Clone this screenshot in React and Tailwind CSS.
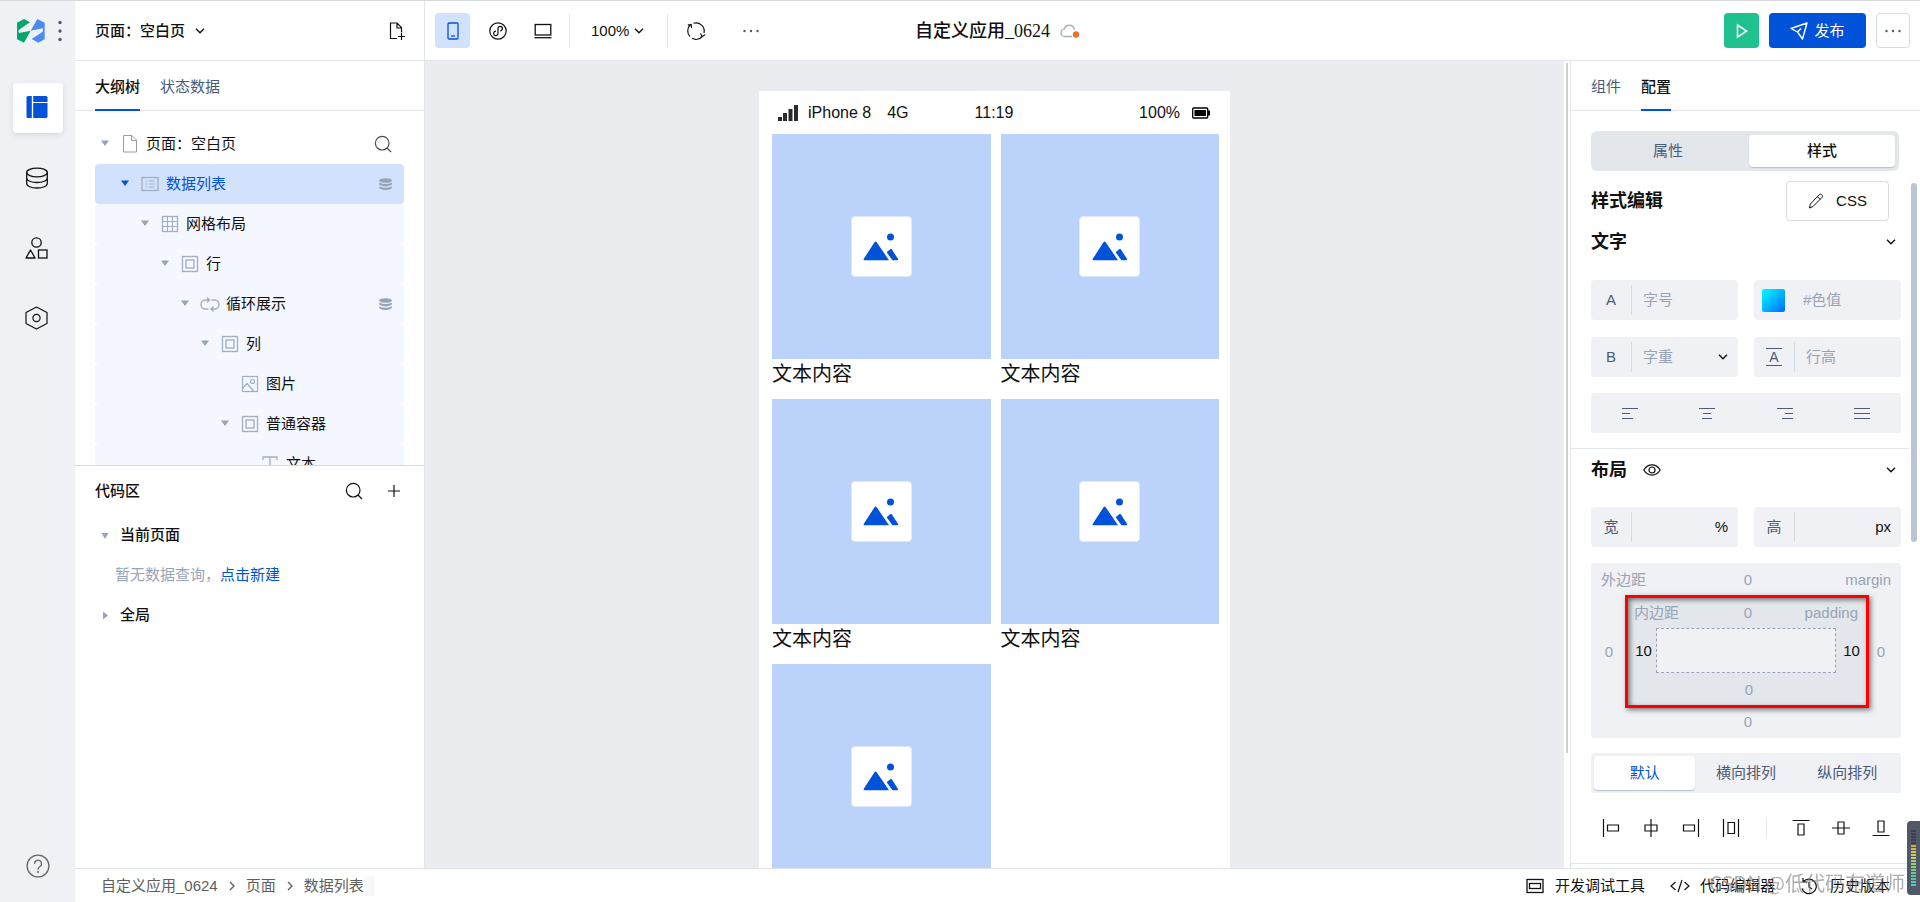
import React, { useState } from 'react';
import clsx from 'clsx';

const Icon = ({ w = 18, h = w, sw = 1, className, children }) => (
  <svg
    width={w}
    height={h}
    viewBox={`0 0 ${w} ${h}`}
    fill="none"
    stroke="currentColor"
    strokeWidth={sw}
    className={clsx('shrink-0', className)}
    aria-hidden="true"
  >
    {children}
  </svg>
);

const Chevron = ({ className }) => (
  <Icon w={10} h={8} sw={1.4} className={className}>
    <path d="M1 1.8l4 4 4-4" />
  </Icon>
);

const ChevronRight = () => (
  <Icon w={8} h={10} sw={1.3}>
    <path d="M2 1l4 4-4 4" />
  </Icon>
);

const Caret = ({ small, right, className }) => (
  <Icon w={12} h={12} className={className}>
    {right ? (
      <path d="M4 2.5l5 4-5 4z" fill="currentColor" stroke="none" />
    ) : small ? (
      <path d="M2.5 4h7L6 10z" fill="currentColor" stroke="none" />
    ) : (
      <path d="M2 2.500h8L6 8z" fill="currentColor" stroke="none" />
    )}
  </Icon>
);

const Dots = ({ className }) => (
  <Icon w={18} h={4} className={className}>
    <g fill="currentColor" stroke="none">
      <circle cx="2.5" cy="2" r="1.2" />
      <circle cx="9" cy="2" r="1.2" />
      <circle cx="15.5" cy="2" r="1.2" />
    </g>
  </Icon>
);

const SearchIcon = () => (
  <Icon w={18} sw={1.2}>
    <circle cx="8.2" cy="8.2" r="6.8" />
    <path d="M13 13l4 4" />
  </Icon>
);

const Logo = () => (
  <svg width="28" height="24" viewBox="0 0 84 72" className="shrink-0" aria-hidden="true">
    <path d="M0 11L21 0l18 10L6 32q-4 4 0 10l35-7-20 36L0 61z" fill="#05a66b" />
    <path d="M41 35L61 0l22 11v50L64 71 44 60l33-22q3-6 0-10z" fill="#4a8bf5" />
  </svg>
);

const treeIcons = {
  page: (
    <Icon className="text-[#9b9b9b]">
      <path d="M2.5.5h8.500l4.500 4.500v12h-13z M10.500.5v5h5" />
    </Icon>
  ),
  list: (
    <Icon>
      <rect x="1" y="2.500" width="16" height="13" strokeWidth="1.300" />
      <path d="M4.500 6h1.500M7.500 6h6M4.500 9h1.500M7.500 9h6M4.500 12h1.500M7.500 12h6" />
    </Icon>
  ),
  grid: (
    <Icon>
      <rect x="1.500" y="1.500" width="15" height="15" strokeWidth="1.300" />
      <path d="M6.500 1.500v15M11.500 1.500v15M1.500 6.500h15M1.500 11.500h15" />
    </Icon>
  ),
  box: (
    <Icon sw={1.3}>
      <rect x="1.500" y="1.500" width="15" height="15" />
      <rect x="5" y="5" width="8" height="8" />
    </Icon>
  ),
  loop: (
    <Icon w={20} h={18} sw={1.4}>
      <path d="M8.500 14H5.500a4.500 4.500 0 0 1 0-9h4M7 2.500l2.500 2.500L7 7.500M11.500 5h3a4.500 4.500 0 0 1 0 9h-3.500M13.500 11.500L11 14l2.500 2.500" />
    </Icon>
  ),
  image: (
    <Icon sw={1.2}>
      <rect x="1.500" y="1.500" width="15" height="15" />
      <circle cx="11.500" cy="6.500" r="2" />
      <path d="M1.500 13.500l4.500-5 7 8" />
    </Icon>
  ),
  text: (
    <Icon sw={1.3}>
      <path d="M2 5V2h14v3M9 2v14M6 16h6" />
    </Icon>
  ),
};

const treeRows = [
  { label: '页面：空白页', level: 0, icon: 'page', search: true },
  { label: '数据列表', level: 1, icon: 'list', data: true, selected: true },
  { label: '网格布局', level: 2, icon: 'grid' },
  { label: '行', level: 3, icon: 'box' },
  { label: '循环展示', level: 4, icon: 'loop', data: true },
  { label: '列', level: 5, icon: 'box' },
  { label: '图片', level: 6, icon: 'image', leaf: true },
  { label: '普通容器', level: 6, icon: 'box' },
  { label: '文本', level: 7, icon: 'text', leaf: true },
];

const TreeRow = ({ row }) => (
  <li
    className={clsx(
      'flex h-10 items-center rounded pr-3',
      row.selected ? 'bg-[#d3e2fc] text-[#0052d9]' : row.level > 0 && 'bg-[#f4f7ff]'
    )}
    style={{ paddingLeft: row.level * 20 + 4 }}
  >
    <span className="w-[22px]">
      {!row.leaf && <Caret className={row.selected ? 'text-[#0052d9]' : 'text-[#97a3b7]'} />}
    </span>
    <span className="mr-[7px] flex w-[18px] justify-center text-[#a3aec2]">{treeIcons[row.icon]}</span>
    <span>{row.label}</span>
    {row.search && (
      <button className="ml-auto text-[#4b4b4b]" aria-label="搜索组件">
        <SearchIcon />
      </button>
    )}
    {row.data && (
      <Icon w={13} h={14} className="ml-auto text-[#97a3b7]">
        <g fill="currentColor" stroke="none">
          <ellipse cx="6.500" cy="3.500" rx="6.300" ry="2.300" />
          <path d="M.2 5.400q6.300 3 12.600 0v2.400q-6.300 3.400-12.600 0zM.2 9.200q6.300 3 12.600 0v2q-6.300 3.800-12.600 0z" />
        </g>
      </Icon>
    )}
  </li>
);

const Sidebar = () => {
  const items = [
    {
      label: '页面',
      active: true,
      icon: (
        <Icon w={22} className="text-[#0052d9]">
          <g fill="currentColor" stroke="none">
            <path d="M2 0h3.800v22H2a1.500 1.500 0 0 1-1.500-1.500v-19A1.500 1.500 0 0 1 2 0z" />
            <path d="M7.200 0H20a1.500 1.500 0 0 1 1.500 1.500V6H7.200z" />
            <path d="M7.200 7h14.300v13.500A1.500 1.500 0 0 1 20 22H7.200z" />
          </g>
        </Icon>
      ),
    },
    {
      label: '数据源',
      icon: (
        <Icon w={24} sw={1.3}>
          <ellipse cx="12" cy="6.500" rx="10.300" ry="4.300" />
          <path d="M1.700 6.500v11c0 2.600 4.600 4.500 10.300 4.500s10.300-1.900 10.300-4.500v-11M1.700 12c0 2.600 4.600 4.500 10.300 4.500s10.300-1.900 10.300-4.500" />
        </Icon>
      ),
    },
    {
      label: '素材',
      icon: (
        <Icon w={24} sw={1.3}>
          <circle cx="11.500" cy="6.500" r="4.700" />
          <path d="M5.500 14l4.600 8H1z" strokeLinejoin="round" />
          <rect x="13.500" y="14" width="8.500" height="8" />
        </Icon>
      ),
    },
    {
      label: '设置',
      icon: (
        <Icon w={24} sw={1.2}>
          <path d="M11.500 1l10.500 5.500v11L11.500 23 1 17.500v-11z" strokeLinejoin="round" />
          <circle cx="11.500" cy="12" r="3.600" />
        </Icon>
      ),
    },
  ];

  return (
    <aside className="flex w-[75px] shrink-0 flex-col bg-[#f0f1f5] pb-[11px]">
      <div className="flex h-[60px] items-center pl-[17px]">
        <Logo />
        <button className="ml-[13px] text-[#4b5b76]" aria-label="菜单">
          <Icon w={4} h={22}>
            <g fill="currentColor" stroke="none">
              <circle cx="2" cy="2.500" r="1.700" />
              <circle cx="2" cy="11" r="1.700" />
              <circle cx="2" cy="19.500" r="1.700" />
            </g>
          </Icon>
        </button>
      </div>
      <nav className="mt-[22px] flex flex-col items-center gap-5">
        {items.map((item) => (
          <button
            key={item.label}
            aria-label={item.label}
            className={clsx(
              'flex h-[50px] w-[50px] items-center justify-center rounded pr-[2px]',
              item.active && 'bg-white pb-[2px] shadow-[0_2px_6px_rgba(0,0,0,0.1)]'
            )}
          >
            {item.icon}
          </button>
        ))}
      </nav>
      <button
        className="mx-auto mt-auto flex h-[50px] w-[50px] items-center justify-center text-[#666]"
        aria-label="帮助"
      >
        <Icon w={24} sw={1.3}>
          <circle cx="12" cy="12" r="10.900" />
          <path d="M8.500 9.800a3.500 3.500 0 1 1 5.200 3c-1.200.7-1.700 1.300-1.700 3" />
          <circle cx="12" cy="18" r="1" fill="currentColor" stroke="none" />
        </Icon>
      </button>
    </aside>
  );
};

const Header = () => (
  <header className="grid h-[60px] shrink-0 grid-cols-[1fr_auto_1fr] items-center border-b border-[#e3e6eb]">
    <div className="flex h-full items-center">
      <div className="flex h-full w-[350px] items-center border-r border-[#e3e6eb] pr-[19px] pl-5">
        <button className="flex items-center gap-[10px] font-medium">
          页面：空白页
          <Chevron />
        </button>
        <button className="ml-auto" aria-label="新建页面">
          <Icon w={16} h={18} sw={1.2}>
            <path d="M8 16.500H1.500V1H8l4.500 4.500v5M8 1v5h4.500M9 14.500h7M12.500 11v7" />
          </Icon>
        </button>
      </div>
      <button
        className="ml-[10px] flex h-[35px] w-[35px] items-center justify-center rounded bg-[#d3e2fc] text-[#0052d9]"
        aria-label="手机"
      >
        <Icon w={12} h={18} sw={1.3}>
          <rect x="1" y="1" width="10" height="16" rx="1" />
          <path d="M4 14h4" />
        </Icon>
      </button>
      <button className="ml-[10px] flex h-[35px] w-[35px] items-center justify-center" aria-label="小程序">
        <Icon w={18} sw={1.2}>
          <circle cx="9" cy="9" r="8.200" />
          <path d="M7 9.200a2.200 2.200 0 1 0 2 2.200V6.600a2.200 2.200 0 1 1 2.200 2.200" />
        </Icon>
      </button>
      <button className="ml-[10px] flex h-[35px] w-[35px] items-center justify-center" aria-label="电脑">
        <Icon w={18} h={16} sw={1.3}>
          <rect x="1.200" y="1.500" width="15.600" height="10.500" />
          <path d="M.5 14.700h17" />
        </Icon>
      </button>
      <div className="ml-[9px] h-[34px] w-px bg-[#e3e6eb]" />
      <label className="ml-[21px] flex items-center gap-1">
        <select className="appearance-none outline-none" aria-label="缩放">
          <option>100%</option>
        </select>
        <Chevron />
      </label>
      <div className="ml-[23px] h-[34px] w-px bg-[#e3e6eb]" />
      <button className="ml-[10px] flex h-[35px] w-[35px] items-center justify-center" aria-label="刷新">
        <Icon w={20} sw={1.2}>
          <path d="M7.500 2.200A8.300 8.300 0 0 1 18 12M16.200 15.500A8.300 8.300 0 0 1 6 17.300M4 15.700A8.300 8.300 0 0 1 4.500 3.800" />
          <path d="M1.800 4.200l3.300-.7.5 3.400M14.500 12.500l1.700 3 3-1.700" />
        </Icon>
      </button>
      <button className="ml-5 flex h-[35px] w-[35px] items-center justify-center text-[#4b5b76]" aria-label="更多工具">
        <Dots />
      </button>
    </div>

    <h1 className="flex items-center gap-[10px] font-['Liberation_Serif','Noto_Sans_CJK_SC',serif] text-lg font-medium">
      自定义应用_0624
      <Icon w={20} h={16} sw={1.4} className="text-[#a3aec2]">
        <path d="M12 13.500H5a3.800 3.800 0 0 1-.5-7.600 5 5 0 0 1 9.800 1" />
        <circle cx="16" cy="11.500" r="3.200" fill="#ed6f2d" stroke="none" />
      </Icon>
    </h1>

    <div className="flex items-center justify-end gap-[10px] pr-[10px]">
      <button
        className="flex h-[35px] w-[35px] items-center justify-center rounded bg-[#1fc28f] text-white"
        aria-label="预览"
      >
        <Icon w={12} h={16} sw={1.5}>
          <path d="M1.500 2v12l9.200-6z" />
        </Icon>
      </button>
      <button className="flex h-[35px] w-[97px] items-center justify-center gap-[6px] rounded bg-[#0052d9] text-white">
        <Icon w={18} sw={1.4}>
          <path d="M1 6.500L17 1l-4.500 16-5-7zM7.500 10l3.500-3.500" strokeLinejoin="round" />
        </Icon>
        发布
      </button>
      <button
        className="flex h-[35px] w-[34px] items-center justify-center rounded border border-[#d5dae3] text-[#4b5b76]"
        aria-label="更多"
      >
        <Dots />
      </button>
    </div>
  </header>
);

const Tabs = ({ tabs, active, onChange }) => (
  <div className="flex h-[50px] shrink-0 gap-5 border-b border-[#e3e6eb] px-5" role="tablist">
    {tabs.map((tab) => (
      <button
        key={tab}
        role="tab"
        aria-selected={tab === active}
        onClick={() => onChange(tab)}
        className={clsx(
          'h-[50px] border-b-2 pt-1',
          tab === active ? 'border-[#0052d9] font-medium' : 'border-transparent text-[#4b5b76]'
        )}
      >
        {tab}
      </button>
    ))}
  </div>
);

const LeftPanel = () => {
  const [tab, setTab] = useState('大纲树');

  return (
    <section className="flex w-[350px] shrink-0 flex-col border-r border-[#e3e6eb]">
      <Tabs tabs={['大纲树', '状态数据']} active={tab} onChange={setTab} />
      <ul className="h-[354px] overflow-hidden px-5 pt-[13px]">
        {treeRows.map((row) => (
          <TreeRow key={row.label} row={row} />
        ))}
      </ul>
      <div className="flex-1 border-t border-[#d5dae3] px-5">
        <div className="flex h-[49px] items-center">
          <h2 className="font-medium">代码区</h2>
          <button className="ml-auto" aria-label="搜索代码">
            <SearchIcon />
          </button>
          <button className="mr-1 ml-[25px]" aria-label="新建代码">
            <Icon w={12} sw={1.2}>
              <path d="M6 0v12M0 6h12" />
            </Icon>
          </button>
        </div>
        <h3 className="flex h-10 items-center gap-[9px] pl-1 font-medium">
          <Caret small className="text-[#97a3b7]" />
          当前页面
        </h3>
        <p className="flex h-10 items-center pl-5 text-[#97a3b7]">
          暂无数据查询，
          <a href="#new" className="text-[#0052d9]">
            点击新建
          </a>
        </p>
        <h3 className="flex h-10 items-center gap-[9px] pl-1 font-medium">
          <Caret right className="text-[#97a3b7]" />
          全局
        </h3>
      </div>
    </section>
  );
};

const PhoneCard = () => (
  <div className="mb-[10px]">
    <div className="flex h-[225px] items-center justify-center bg-[#bbd3fb]">
      <div className="flex h-[61px] w-[61px] items-center justify-center rounded border border-[#dfe9fd] bg-white">
        <svg width="36" height="28" viewBox="0 0 36 28" fill="#0052d9" aria-hidden="true">
          <circle cx="27.500" cy="4" r="3.500" />
          <path d="M12.300 8.700q.6-.4 1.200.3L26 27.300H1.300Q0 27 .8 25.800L11.500 9.300zM27.500 16q.8-.4 1.400.4l6 9.400q.6 1.300-.8 1.500h-4.600l-5.300-7.200q-.4-.7 0-1.300z" />
        </svg>
      </div>
    </div>
    <p className="text-xl leading-[30px]">文本内容</p>
  </div>
);

const Canvas = () => (
  <main className="flex min-w-0 flex-1">
    <div className="flex flex-1 justify-center overflow-hidden bg-[#ebecf0] pt-[30px]">
      <div className="h-fit w-[471px] shrink-0 bg-white">
        <div className="grid h-[43px] grid-cols-[1fr_auto_1fr] items-center pr-5 pl-[19px] text-base">
          <div className="flex items-center">
            <Icon w={20} h={16} className="mr-[10px] text-[#2b2b2b]">
              <path
                d="M0 12h4v4H0zM5 8h4v8H5zM10.500 4h4v12h-4zM16 0h4v16h-4z"
                fill="currentColor"
                stroke="none"
              />
            </Icon>
            iPhone 8<span className="ml-4">4G</span>
          </div>
          <span>11:19</span>
          <div className="flex items-center justify-end gap-3">
            100%
            <Icon w={18} h={12} className="text-black">
              <rect x=".7" y="1" width="15" height="10" rx="1" strokeWidth="1.300" />
              <path d="M2.500 3h11.500v6H2.500zM16 3.500h2v5h-2z" fill="currentColor" stroke="none" />
            </Icon>
          </div>
        </div>
        <div className="grid grid-cols-2 gap-x-[10px] pr-[11px] pl-[13px]">
          {[1, 2, 3, 4, 5].map((n) => (
            <PhoneCard key={n} />
          ))}
        </div>
      </div>
    </div>
    <div className="w-[6px] pt-[2px] pl-[2px]">
      <div className="h-[690px] w-[2px] bg-[#cfcfcf]" />
    </div>
  </main>
);

const Field = ({ id, label, placeholder, unit, children }) => (
  <div className="flex h-10 items-center rounded bg-[#f0f1f5]">
    <label htmlFor={id} className="flex h-[30px] w-[41px] shrink-0 items-center justify-center border-r border-[#d5dae3] text-[#4b5b76]">
      {label}
    </label>
    {children || (
      <input
        id={id}
        type="text"
        placeholder={placeholder}
        className="w-0 flex-1 bg-transparent pl-[11px] outline-none placeholder:text-[#97a3b7]"
      />
    )}
    {unit && <span className="pr-[10px]">{unit}</span>}
  </div>
);

const SectionTitle = ({ title, children }) => (
  <div className="flex h-[42px] items-center">
    <h2 className="text-lg font-bold">{title}</h2>
    {children}
    <button className="mr-[5px] ml-auto" aria-label={`收起${title}`}>
      <Chevron />
    </button>
  </div>
);

const SpacingInput = ({ label, value = '0', className = 'w-8 pl-1' }) => (
  <input
    type="text"
    aria-label={label}
    defaultValue={value}
    className={clsx('bg-transparent text-center outline-none', className)}
  />
);

const BoxModel = () => (
  <div className="rounded bg-[#f0f1f5] text-[#97a3b7]">
    <div className="grid h-[34px] grid-cols-[1fr_auto_1fr] items-center px-[10px]">
      <span>外边距</span>
      <SpacingInput label="上外边距" />
      <span className="text-right">margin</span>
    </div>
    <div className="flex items-center">
      <SpacingInput label="左外边距" className="w-9" />
      <div className="relative flex-1 bg-[#e3e6eb]">
        <div className="grid h-[31px] grid-cols-[1fr_auto_1fr] items-center pr-[9px] pl-[7px]">
          <span>内边距</span>
          <SpacingInput label="上内边距" />
          <span className="text-right">padding</span>
        </div>
        <div className="flex h-[45px] items-stretch">
          <SpacingInput label="左内边距" value="10" className="w-[29px] pl-1 text-[#111]" />
          <div className="flex-1 border border-dashed border-[#97a3b7] bg-[#f0f1f5]" />
          <SpacingInput label="右内边距" value="10" className="w-[31px] text-[#111]" />
        </div>
        <div className="flex h-[33px] items-center justify-center">
          <SpacingInput label="下内边距" />
        </div>
        <div className="pointer-events-none absolute -inset-[2px] border-[3px] border-[#f00] shadow-[2px_2px_5px_rgba(0,0,0,0.5),inset_2px_2px_5px_rgba(0,0,0,0.5)]" />
      </div>
      <SpacingInput label="右外边距" className="w-[34px] pr-[6px]" />
    </div>
    <div className="flex h-8 items-center justify-center">
      <SpacingInput label="下外边距" />
    </div>
  </div>
);

const textAligns = [
  { label: '左对齐', d: 'M0 1.500h16M0 6.500h8M0 11.500h11' },
  { label: '居中对齐', d: 'M0 1.500h16M4 6.500h8M3 11.500h10' },
  { label: '右对齐', d: 'M0 1.500h16M8 6.500h8M5 11.500h11' },
  { label: '两端对齐', d: 'M0 1.500h16M0 6.500h16M0 11.500h16' },
];

const mainAligns = [
  { label: '主轴起点', d: 'M1.500 0v18M5.500 6h11v6h-11z' },
  { label: '主轴居中', d: 'M9 0v18M3 6h12v6H3z' },
  { label: '主轴终点', d: 'M16.500 0v18M1.500 6h11v6h-11z' },
  { label: '主轴分布', d: 'M1.500 0v18M16.500 0v18M6 3.500h6.500v11H6z' },
];

const crossAligns = [
  { label: '交叉轴起点', d: 'M.5 1.500h17M6 5h6v11H6z' },
  { label: '交叉轴居中', d: 'M0 9h18M6 3h6v12H6z' },
  { label: '交叉轴终点', d: 'M.5 16.500h17M6 2h6v11H6z' },
];

const AlignButton = ({ item }) => (
  <button className="flex h-10 w-10 items-center justify-center" aria-label={item.label}>
    <Icon w={18} sw={1.2}>
      <path d={item.d} />
    </Icon>
  </button>
);

const RightPanel = () => {
  const [tab, setTab] = useState('配置');

  return (
    <section className="relative flex w-[350px] shrink-0 flex-col overflow-hidden border-l border-[#e3e6eb]">
      <Tabs tabs={['组件', '配置']} active={tab} onChange={setTab} />
      <div className="mt-5 mr-[21px] ml-5 grid h-10 shrink-0 grid-cols-2 rounded-md bg-[#e3e6eb]">
        <button className="text-[#4b5b76]">属性</button>
        <button className="m-1 rounded-sm bg-white font-medium shadow-[0_1px_1px_#b5bfce]">样式</button>
      </div>

      <div className="mr-[11px] border-b border-[#e3e6eb] pt-[10px] pr-2 pb-[15px] pl-5">
        <div className="flex h-10 items-center justify-between pr-3">
          <h2 className="text-lg font-bold">样式编辑</h2>
          <button className="flex h-10 w-[103px] items-center justify-center gap-3 rounded border border-[#d5dae3]">
            <Icon w={16} sw={1}>
              <path d="M1.500 15l.8-4L11.500 1.500q1-.8 2 0l.7.800q.8 1 0 2L5 13.500zM9.500 3.700l2.700 2.800" />
            </Icon>
            CSS
          </button>
        </div>
        <SectionTitle title="文字" />
        <div className="mt-[17px] grid grid-cols-2 gap-x-4 gap-y-[17px]">
          <Field id="font-size" label="A" placeholder="字号" />
          <div className="flex h-10 items-center rounded bg-[#f0f1f5] pl-2">
            <span className="h-[23px] w-[23px] rounded-xs bg-linear-135 from-[#00fcff] to-[#0566ff]" />
            <input
              type="text"
              aria-label="文字颜色"
              placeholder="#色值"
              className="w-0 flex-1 bg-transparent pl-[18px] outline-none placeholder:text-[#97a3b7]"
            />
          </div>
          <Field id="font-weight" label="B">
            <select
              id="font-weight"
              className="w-0 flex-1 appearance-none bg-transparent pl-[11px] text-[#97a3b7] outline-none"
            >
              <option>字重</option>
            </select>
            <Chevron className="mr-[10px]" />
          </Field>
          <Field
            id="line-height"
            label={
              <span className="flex h-[18px] w-4 items-center justify-center border-y border-[#4b5b76] text-sm" aria-label="行高">
                A
              </span>
            }
            placeholder="行高"
          />
        </div>
        <div className="mt-4 flex h-10 rounded bg-[#f0f1f5] text-[#4b5b76]">
          {textAligns.map((item) => (
            <button key={item.label} className="flex flex-1 items-center justify-center" aria-label={item.label}>
              <Icon w={16} h={13} sw={1.2}>
                <path d={item.d} />
              </Icon>
            </button>
          ))}
        </div>
      </div>

      <div className="mr-[11px] border-b border-[#e3e6eb] pr-2 pb-[15px] pl-5">
        <SectionTitle title="布局">
          <button className="ml-4" aria-label="显示或隐藏">
            <Icon w={18} h={12} sw={1.2}>
              <path d="M.8 6C5-.8 13-.8 17.200 6 13 12.800 5 12.800.8 6z" />
              <circle cx="9" cy="6" r="3" />
            </Icon>
          </button>
        </SectionTitle>
        <div className="mt-4 grid grid-cols-2 gap-x-4">
          <Field id="width" label="宽" unit="%" />
          <Field id="height" label="高" unit="px" />
        </div>
        <div className="mt-4">
          <BoxModel />
        </div>
        <div className="mt-[15px] flex h-10 rounded bg-[#f0f1f5] p-[3px] text-[#4b5b76]">
          <button className="flex-1 rounded-sm bg-white text-[#0052d9] shadow-[0_1px_1px_#b5bfce]">默认</button>
          <button className="flex-1">横向排列</button>
          <button className="flex-1">纵向排列</button>
        </div>
        <div className="mt-[15px] flex items-center justify-between">
          {mainAligns.map((item) => (
            <AlignButton key={item.label} item={item} />
          ))}
          <div className="mx-[14px] h-5 w-px bg-[#e3e6eb]" />
          {crossAligns.map((item) => (
            <AlignButton key={item.label} item={item} />
          ))}
        </div>
      </div>

      <div className="absolute top-[122px] right-[3px] h-[359px] w-[6px] rounded-full bg-[#bcc5d3]" />
    </section>
  );
};

const Footer = () => (
  <footer className="flex h-[34px] shrink-0 items-center border-t border-[#dfe2ea] pr-[30px] pl-[26px]">
    <nav className="flex items-center gap-[10px] text-[#5e5e5e]">
      <a href="#app">自定义应用_0624</a>
      <ChevronRight />
      <a href="#page">页面</a>
      <ChevronRight />
      <a href="#list" className="bg-linear-to-r from-white from-80% to-[#f4f5f8] pr-[10px]">
        数据列表
      </a>
    </nav>
    <div className="ml-auto flex items-center">
      <button className="flex items-center gap-[11px]">
        <Icon w={18} h={16} sw={1.3}>
          <rect x="1" y="1.500" width="16" height="13" />
          <rect x="3.500" y="5.500" width="11" height="5" />
        </Icon>
        开发调试工具
      </button>
      <button className="ml-[25px] flex items-center gap-[10px]">
        <Icon w={20} h={14} sw={1.2}>
          <path d="M5.500 3L1 7l4.500 4M14.500 3L19 7l-4.500 4M12 1L8 13" />
        </Icon>
        代码编辑器
      </button>
      <button className="ml-[25px] flex items-center gap-3">
        <Icon w={18} sw={1.2}>
          <path d="M3.500 4.500A7.300 7.300 0 1 1 2 11.500M3 1v4h4M9 5v5l3 2" />
        </Icon>
        历史版本
      </button>
    </div>
  </footer>
);

// level meter docked on the right screen edge
const meter = [
  'bg-[#3b404c]', 'bg-[#3b404c]', 'bg-[#3b404c]', 'bg-[#3b404c]', 'bg-[#3b404c]',
  'bg-[#d6a738]', 'bg-[#d9b63c]', 'bg-[#d6c741]', 'bg-[#cfd049]', 'bg-[#bfd257]',
  'bg-[#add163]', 'bg-[#9bd06e]', 'bg-[#88cd77]', 'bg-[#76cb80]', 'bg-[#66cb8a]',
  'bg-[#5acc95]', 'bg-[#50cda0]', 'bg-[#4bcfab]', 'bg-[#48d1b4]',
];

const App = () => {
  return (
    <div className="flex h-screen overflow-hidden border-t border-[#d9dade] bg-white font-['Liberation_Sans','Noto_Sans_CJK_SC',sans-serif] text-[15px] leading-5 text-[#111]">
      <Sidebar />
      <div className="flex min-w-0 flex-1 flex-col">
        <Header />
        <div className="flex min-h-0 flex-1">
          <LeftPanel />
          <Canvas />
          <RightPanel />
        </div>
        <Footer />
      </div>

      <div className="pointer-events-none fixed right-[15px] bottom-[6px] font-['Noto_Sans_CJK_SC',sans-serif] text-xl leading-[26px] text-[#777]/60">
        CSDN @低代码布道师
      </div>
      <div className="fixed right-0 bottom-[7px] flex h-[74px] w-[13px] flex-col items-center justify-center gap-px rounded-l bg-[#515868]">
        {meter.map((color, index) => (
          <span key={index} className={clsx('h-[2px] w-[5px]', color)} />
        ))}
      </div>
    </div>
  );
};

export default App;
